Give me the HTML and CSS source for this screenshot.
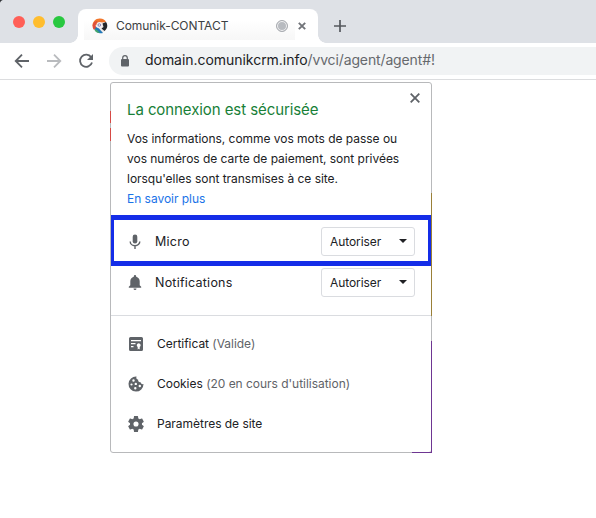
FILE: index.html
```html
<!DOCTYPE html>
<html lang="fr">
<head>
<meta charset="utf-8">
<title>Comunik-CONTACT</title>
<link rel="stylesheet" href="styles.css">
</head>
<body>
<header class="tabstrip">
  <div class="lights"><i class="red"></i><i class="amber"></i><i class="green"></i></div>
  <div class="tab">
    <svg class="favicon" viewBox="0 0 16 16">
      <circle cx="8" cy="8" r="7" fill="#eee9e7"/>
      <path d="M.6 8C0 4 4 .3 8 .6c3 0 5 1.200 6 3.400L9 4.500 4 7z" fill="#f2762b"/>
      <path d="M.6 9c0-4 2-6 5-6L3.500 7l1 4-3 .5z" fill="#df4f3d"/>
      <path d="M4 9l3 1.500 4 4.500c-4 1-8-1-8-4z" fill="#2178b8"/>
      <path d="M2 11l3 1 3 3c-3 .3-5-1.500-6-4z" fill="#43a66a"/>
      <circle cx="7.500" cy="7" r="2.900" fill="#f5edf0"/>
      <circle cx="7.300" cy="7" r="1.300" fill="none" stroke="#8c84b5"/>
      <path d="M10.500 5.500L14 4c2.200 3 1.500 6.500-1.500 9L9.500 10.500l2-1.500z" fill="#24262a"/>
    </svg>
    <span class="tab-title">Comunik-CONTACT</span>
    <span class="recording"></span>
    <svg class="tab-close" viewBox="0 0 8 8"><path d="M.8.8l6.400 6.400M7.200.8L.8 7.200"/></svg>
  </div>
  <svg class="new-tab" viewBox="0 0 12 12"><path d="M6 0v12M0 6h12"/></svg>
</header>
<nav class="toolbar">
  <svg class="nav-icon" viewBox="0 0 16 16"><path d="M15 8H2M8 1.700L1.700 8 8 14.300"/></svg>
  <svg class="nav-icon forward" viewBox="0 0 16 16"><path d="M1 8h13M8 1.700L14.300 8 8 14.300"/></svg>
  <svg class="nav-icon reload" viewBox="0 0 16 16"><path d="M13.200 4.200A6.100 6.100 0 1 0 14 9.500"/><path class="solid" d="M15 1v6H9z"/></svg>
  <div class="address">
    <svg class="lock" viewBox="0 0 10 12"><rect x="1" y="4" width="8" height="7.500" rx="1" fill="#5f6368"/><path d="M2.700 5V3a2.300 2.300 0 0 1 4.600 0v2" fill="none" stroke="#5f6368" stroke-width="1.200"/></svg>
    <span class="url"><span class="domain">domain.comunikcrm.info</span><span class="path">/vvci/agent/agent#!</span></span>
  </div>
</nav>
<main class="page">
  <section class="popover">
    <i class="edge red-top"></i><i class="edge red-low"></i><i class="edge gold"></i><i class="edge purple"></i><i class="edge purple-base"></i>
    <div class="intro">
      <svg class="close" viewBox="0 0 10 10"><path d="M.7.7l8.600 8.600M9.300.7L.7 9.300"/></svg>
      <h1>La connexion est sécurisée</h1>
      <p>Vos informations, comme vos mots de passe ou<br>vos numéros de carte de paiement, sont privées<br>lorsqu'elles sont transmises à ce site.</p>
      <a class="more">En savoir plus</a>
    </div>
    <div class="permission highlighted">
      <svg class="icon" viewBox="0 0 16 16"><rect x="5.700" y=".5" width="4.600" height="9" rx="2.300"/><path class="line" d="M3.200 7.500a4.800 4.300 0 0 0 9.600 0M8 12v3"/></svg>
      <span class="name">Micro</span>
      <button class="select"><span>Autoriser</span><i></i></button>
    </div>
    <div class="permission">
      <svg class="icon" viewBox="0 0 16 16"><path d="M6.800 1.800V1.200a1.200 1.200 0 0 1 2.400 0v.6c2.300.6 3.500 2.400 3.500 4.700v3.800l1.500 1.500v1H1.800v-1l1.500-1.500V6.500c0-2.300 1.200-4.100 3.500-4.700zM6.500 13.500h3a1.500 1.500 0 0 1-3 0z"/></svg>
      <span class="name">Notifications</span>
      <button class="select"><span>Autoriser</span><i></i></button>
    </div>
    <div class="details">
      <div class="detail">
        <svg class="icon" viewBox="0 0 16 16"><path fill-rule="evenodd" d="M2.500 1h11A1.500 1.500 0 0 1 15 2.500v11a1.500 1.500 0 0 1-1.500 1.500h-11A1.500 1.500 0 0 1 1 13.500v-11A1.500 1.500 0 0 1 2.500 1zM3 4v1.200h10V4zM3 7v1.200h4.500V7zM3 10v1.200h2.500V10zM10.700 7.300a2 2 0 0 0-1 3.700v2.500l1-.7 1 .7V11a2 2 0 0 0-1-3.700z"/></svg>
        <span>Certificat <em>(Valide)</em></span>
      </div>
      <div class="detail">
        <svg class="icon" viewBox="0 0 16 16"><path fill-rule="evenodd" d="M8.500.6a7.500 7.500 0 1 0 7 7.400c-1.500.5-2.700-.2-2.800-1.700-1.700.3-2.900-.9-2.500-2.500C8.700 3.600 7.900 2.300 8.500.6zM5.500 3.300a1.200 1.200 0 1 1 0 2.400 1.200 1.200 0 0 1 0-2.400zM3.500 7.400a1.100 1.100 0 1 1 0 2.200 1.100 1.100 0 0 1 0-2.200zM7.800 6.700a1.200 1.200 0 1 1 0 2.400 1.200 1.200 0 0 1 0-2.400zM7.300 11a1.200 1.200 0 1 1 0 2.400 1.200 1.200 0 0 1 0-2.400zM11.800 8.800a1.200 1.200 0 1 1 0 2.400 1.200 1.200 0 0 1 0-2.400z"/></svg>
        <span>Cookies <em>(20 en cours d'utilisation)</em></span>
      </div>
      <div class="detail">
        <svg class="icon" viewBox="2 2 20 20"><path d="M19.430 12.980c.04-.32.070-.64.070-.98s-.03-.66-.07-.98l2.110-1.650c.19-.15.240-.42.120-.64l-2-3.460c-.12-.22-.39-.3-.61-.22l-2.490 1c-.52-.4-1.080-.73-1.690-.98l-.38-2.650A.488.488 0 0 0 14 2h-4c-.25 0-.46.180-.49.420l-.38 2.650c-.61.250-1.170.590-1.690.98l-2.490-1c-.23-.09-.49 0-.61.220l-2 3.460c-.13.220-.07.490.120.640l2.110 1.650c-.04.320-.07.650-.07.980s.03.660.070.980l-2.110 1.650c-.19.150-.24.420-.12.640l2 3.460c.12.220.390.300.610.220l2.490-1c.52.400 1.080.730 1.690.980l.38 2.650c.03.240.240.420.490.420h4c.25 0 .46-.18.490-.42l.38-2.650c.61-.25 1.170-.59 1.690-.98l2.490 1c.23.090.49 0 .61-.22l2-3.460c.12-.22.070-.49-.12-.64zM12 15.200a3.200 3.200 0 1 1 0-6.400 3.200 3.200 0 0 1 0 6.400z"/></svg>
        <span>Paramètres de site</span>
      </div>
    </div>
  </section>
</main>
</body>
</html>
```

FILE: styles.css
```css
* { box-sizing: border-box; }
body { margin: 0; width: 596px; height: 518px; overflow: hidden; background: #fff; color: #202124; font: 12px/20px Inter, "Liberation Sans", sans-serif; letter-spacing: -.03px; }
svg { display: block; flex: none; }
.tabstrip { height: 43px; display: flex; background: radial-gradient(circle at 5px 5px, #dee1e6 5px, #303236 6px) 0 0 / 4px 4px no-repeat, #dee1e6; }
.lights { width: 78px; padding: 16px 0 0 13px; display: flex; gap: 8px; }
.lights i { width: 12px; height: 12px; border-radius: 50%; }
.red { background: #ff5f57; }
.amber { background: #ffbd2e; }
.green { background: #28c840; }
.tab { position: relative; width: 240px; height: 34px; margin-top: 9px; padding: 0 12px 0 14px; display: flex; align-items: center; background: linear-gradient(#fff 35%, #f7f7f7) 6px 0 / 211px 31px no-repeat, #fff; border-radius: 8px 8px 0 0; }
.tab::before, .tab::after { content: ""; position: absolute; bottom: 0; width: 8px; height: 8px; }
.tab::before { left: -8px; background: radial-gradient(circle at 0 0, transparent 7.500px, #fff 8px); }
.tab::after { right: -8px; background: radial-gradient(circle at 100% 0, transparent 7.500px, #fff 8px); }
.favicon { width: 16px; height: 16px; }
.tab-title { width: 160px; margin-left: 8px; white-space: nowrap; color: #3c4043; letter-spacing: -.06px; }
.recording { flex: none; width: 12px; height: 12px; border: 1px solid #a9acb1; border-radius: 50%; background: #b8bbc0; box-shadow: inset 0 0 0 1px #f5f5f5; }
.tab-close { width: 8px; height: 8px; margin-left: 10px; fill: none; stroke: #717479; stroke-width: 1.900; }
.new-tab { width: 12px; height: 12px; margin: 20px 0 0 16px; fill: none; stroke: #55585d; stroke-width: 1.700; }
.toolbar { height: 37px; padding: 4px 0 0 14px; display: flex; gap: 16px; border-bottom: 1px solid #dcdddf; }
.nav-icon { width: 16px; height: 16px; margin-top: 6px; fill: none; stroke: #5f6368; stroke-width: 1.800; }
.forward { stroke: #b9bbbe; }
.solid { fill: #5f6368; stroke: none; }
.address { flex: 1; height: 28px; margin-left: -1px; padding-left: 11px; display: flex; align-items: center; background: #f1f3f4; border-radius: 14px 0 0 14px; }
.lock { width: 10px; height: 12px; }
.url { margin-left: 15px; padding-bottom: 2px; font-size: 14px; white-space: nowrap; }
.domain { letter-spacing: -.04px; }
.path { color: #66696d; letter-spacing: -.13px; }
.page { padding: 2px 0 0 110px; }
.popover { position: relative; width: 322px; height: 371px; border: 1px solid #b8b9bb; border-radius: 3px; background: #fff; }
.edge { position: absolute; width: 1px; }
.red-top { left: -1px; top: 28px; height: 12px; background: #d64a45; }
.red-low { left: -1px; top: 45px; height: 13px; background: #d64a45; }
.gold { right: -1px; top: 110px; height: 123px; background: #9a8038; }
.purple { right: -1px; top: 258px; height: 112px; background: #6e3692; }
.purple-base { right: 0; bottom: -1px; width: 19px; height: 1px; background: #6e3692; }
.intro { position: relative; height: 132px; padding: 16px 0 0 16px; white-space: nowrap; }
.close { position: absolute; right: 11px; top: 10px; width: 10px; height: 10px; fill: none; stroke: #5f6368; stroke-width: 1.800; }
h1 { margin: 0 0 9px; font-size: 15px; line-height: 21px; font-weight: 400; letter-spacing: -.08px; color: #188038; }
p { margin: 0; }
.more { display: block; color: #1a73e8; }
.permission { height: 33px; padding: 0 16px; display: flex; align-items: center; }
.highlighted { height: 51px; padding: 2px 13px 0; border: solid #142de8; border-width: 5px 3px; }
.icon { width: 16px; height: 16px; fill: #5f6368; }
.line { fill: none; stroke: #5f6368; stroke-width: 1.400; }
.name { flex: 1; margin-left: 12px; font-size: 12.500px; letter-spacing: .23px; }
.select { width: 94px; height: 29px; padding: 0 7px 0 8px; display: flex; align-items: center; justify-content: space-between; border: 1px solid #dadce0; border-radius: 3px; background: #fff; color: #202124; font: inherit; letter-spacing: -.08px; }
.select i { margin-bottom: 1px; border: solid transparent; border-width: 4.500px 4px 0; border-top-color: #202124; }
.details { margin-top: 16px; padding: 8px 0 0 17px; border-top: 1px solid #dadce0; }
.detail { height: 40px; display: flex; align-items: center; white-space: nowrap; }
.detail span { margin-left: 13px; }
em { color: #5f6368; font-style: normal; }
```
